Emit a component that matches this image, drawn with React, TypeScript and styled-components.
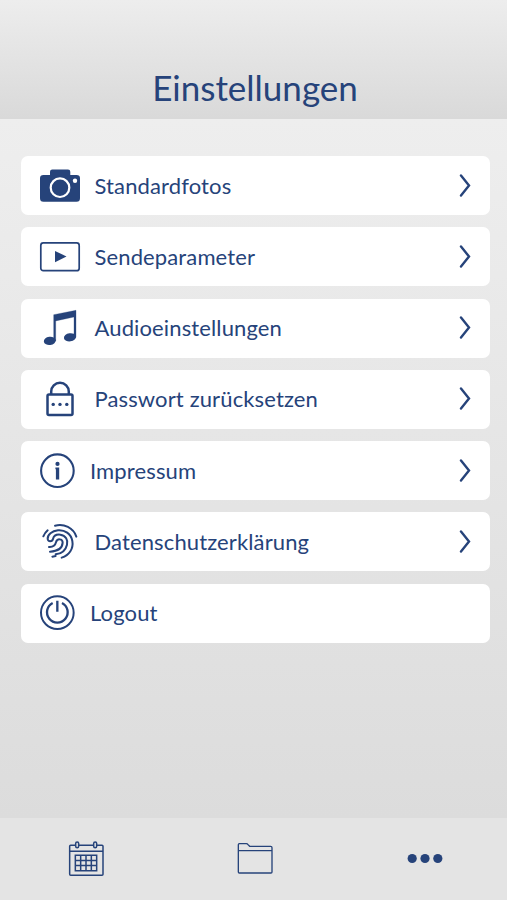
import React from 'react';
import styled, { createGlobalStyle } from 'styled-components';

const ink = '#26437a';

const GlobalStyle = createGlobalStyle`
  * { box-sizing: border-box; }
  body { margin: 0; font-family: Lato, "Open Sans", sans-serif; color: ${ink}; }
`;

const Screen = styled.div`
  width: 507px;
  height: 900px;
  display: flex;
  flex-direction: column;
  overflow: hidden;
  background: #e4e4e4;
`;

const Header = styled.header`
  height: 119px;
  flex: none;
  display: flex;
  justify-content: center;
  align-items: flex-end;
  padding: 0 0 10px 3px;
  background: linear-gradient(#ededed, #d9d9d9);
`;

const Title = styled.h1`
  margin: 0;
  font-size: 35px;
  line-height: 44px;
  font-weight: 400;
`;

const Content = styled.main`
  flex: 1;
  display: flex;
  flex-direction: column;
  gap: 12.3px;
  padding: 37px 17px 0 21px;
  background: linear-gradient(#eeeeee, #dcdcdc);
`;

const Row = styled.button`
  height: 59px;
  flex: none;
  display: flex;
  align-items: center;
  padding: 0 18px 0 19px;
  border: 0;
  border-radius: 7px;
  background: #fff;
  color: inherit;
  font: inherit;
  text-align: left;
`;

const IconSlot = styled.span<{ $narrow?: boolean }>`
  width: ${(p) => (p.$narrow ? 50 : 54.5)}px;
  height: 40px;
  flex: none;
`;

const Label = styled.span`
  flex: 1;
  font-size: 22px;
  line-height: 28px;
  letter-spacing: 0.13px;
`;

const Drawing = styled.svg`
  display: block;
  width: 40px;
  height: 40px;
  fill: none;
  stroke: ${ink};
  overflow: visible;
`;

const Chevron = styled.svg`
  display: block;
  width: 14px;
  height: 24px;
  fill: none;
  stroke: ${ink};
  stroke-width: 2.4;
  stroke-linecap: round;
`;

const TabBar = styled.nav`
  height: 82px;
  flex: none;
  display: grid;
  grid-template-columns: repeat(3, 169.5px);
  padding-left: 1px;
  background: #e4e4e4;
`;

const Tab = styled.button`
  display: flex;
  align-items: center;
  justify-content: center;
  border: 0;
  padding: 0;
  background: none;
`;

const Camera = () => (
  <Drawing viewBox="0 0 40 40">
    <path d="M3.500 9.200H10V6Q10 3.700 12.300 3.700H28Q30.300 3.700 30.300 6V9.200H36.500Q40 9.200 40 12.500V32.500Q40 36 36.500 36H3.500Q0 36 0 32.500V12.500Q0 9.200 3.500 9.200Z" fill={ink} stroke="none" transform="translate(0 -0.300)" />
    <circle cx="20" cy="21.700" r="9.300" stroke="#fff" strokeWidth="2.200" />
    <circle cx="35" cy="14.800" r="2.200" fill="#fff" stroke="none" />
  </Drawing>
);

const Video = () => (
  <Drawing viewBox="0 0 40 40">
    <rect x="0.800" y="5.900" width="38.400" height="27.800" rx="2.500" strokeWidth="1.700" />
    <path d="M15 14 26.500 19.400 15 25.200Z" fill={ink} stroke="none" />
  </Drawing>
);

const Music = () => (
  <Drawing viewBox="0 0 40 40">
    <path d="M13.700 6.700 36 2.300V29.300H34V9L15.700 12.900V33H13.700Z" fill={ink} stroke={ink} strokeWidth="0.300" />
    <ellipse cx="9.800" cy="32.900" rx="6" ry="4.100" fill={ink} stroke="none" transform="rotate(-8 9.800 32.900)" />
    <ellipse cx="30" cy="29.300" rx="6.100" ry="4.100" fill={ink} stroke="none" transform="rotate(-8 30 29.300)" />
  </Drawing>
);

const Lock = () => (
  <Drawing viewBox="0 0 40 40" strokeWidth="2.500">
    <rect x="7.500" y="15.500" width="25" height="20.500" rx="1.500" />
    <path d="M11.200 15V12.500A8.800 8.800 0 0 1 28.800 12.500V15" />
    <g fill={ink} stroke="none">
      <circle cx="13.200" cy="25.400" r="1.700" />
      <circle cx="20" cy="25.400" r="1.700" />
      <circle cx="26.800" cy="25.400" r="1.700" />
    </g>
  </Drawing>
);

const Info = () => (
  <Drawing viewBox="0 0 40 40">
    <circle cx="17.400" cy="19.700" r="16.300" strokeWidth="2.100" />
    <circle cx="17.500" cy="12.900" r="2.100" fill={ink} stroke="none" />
    <path d="M15.400 16.600H19.200V28.500H15.900V18.200H15.400Z" fill={ink} stroke="none" />
  </Drawing>
);

const Fingerprint = () => (
  <Drawing viewBox="60 45 120 120" strokeWidth="6" strokeLinecap="round">
    <path d="M70 88Q75 77 83 70" />
    <path d="M105 56C132 49 160 62 169 89" />
    <path d="M125 152C148 145 161 125 157 102C153 80 134 68 114 70C96 72 82 83 83 96C84 105 97 105 99 96C101 86 111 82 121 83C137 85 145 99 141 113C137 130 125 140 107 142" />
    <path d="M87 120C102 121 106 114 108 106C111 94 128 94 128 107C127 124 112 133 90 134" />
    <path d="M97 149 107 147" />
  </Drawing>
);

const Power = () => (
  <Drawing viewBox="60 45 120 120" strokeWidth="6">
    <circle cx="112" cy="104" r="49" />
    <path d="M98 75A31 31 0 1 0 126 75M112 68V101" strokeWidth="7" />
  </Drawing>
);

const Calendar = () => (
  <Drawing viewBox="47 27 120 120" strokeWidth="4.500">
    <rect x="58" y="46" width="100" height="90" rx="3" />
    <path d="M58 64H158" />
    <path d="M75 76H139V122H75ZM91 76V122M107 76V122M123 76V122M75 91.300H139M75 106.600H139" />
    <rect x="76" y="36" width="9" height="17" rx="4.500" fill="#e4e4e4" />
    <rect x="130" y="36" width="9" height="17" rx="4.500" fill="#e4e4e4" />
  </Drawing>
);

const Folder = () => (
  <Drawing viewBox="46 27 120 120" strokeWidth="4">
    <path d="M56 126V44Q56 41 59 41H80Q83 41 85 44L90 49H153Q157 49 157 53V126Q157 129 154 129H59Q56 129 56 126ZM56 62H157" />
  </Drawing>
);

const More = () => (
  <Drawing viewBox="0 0 40 40">
    <g fill={ink} stroke="none">
      <circle cx="7.200" cy="19.500" r="4.600" />
      <circle cx="20" cy="19.500" r="4.600" />
      <circle cx="32.800" cy="19.500" r="4.600" />
    </g>
  </Drawing>
);

const items = [
  { label: 'Standardfotos', Icon: Camera },
  { label: 'Sendeparameter', Icon: Video },
  { label: 'Audioeinstellungen', Icon: Music },
  { label: 'Passwort zurücksetzen', Icon: Lock },
  { label: 'Impressum', Icon: Info, narrow: true },
  { label: 'Datenschutzerklärung', Icon: Fingerprint },
  { label: 'Logout', Icon: Power, narrow: true, action: true },
];

export default function App() {
  return (
    <Screen>
      <GlobalStyle />
      <Header>
        <Title>Einstellungen</Title>
      </Header>
      <Content>
        {items.map(({ label, Icon, narrow, action }) => (
          <Row key={label}>
            <IconSlot $narrow={narrow}>
              <Icon />
            </IconSlot>
            <Label>{label}</Label>
            {!action && (
              <Chevron viewBox="0 0 14 24">
                <path d="M3 1.500 11 11.500 3 21.500" />
              </Chevron>
            )}
          </Row>
        ))}
      </Content>
      <TabBar>
        <Tab aria-label="Kalender"><Calendar /></Tab>
        <Tab aria-label="Ordner"><Folder /></Tab>
        <Tab aria-label="Mehr"><More /></Tab>
      </TabBar>
    </Screen>
  );
}
